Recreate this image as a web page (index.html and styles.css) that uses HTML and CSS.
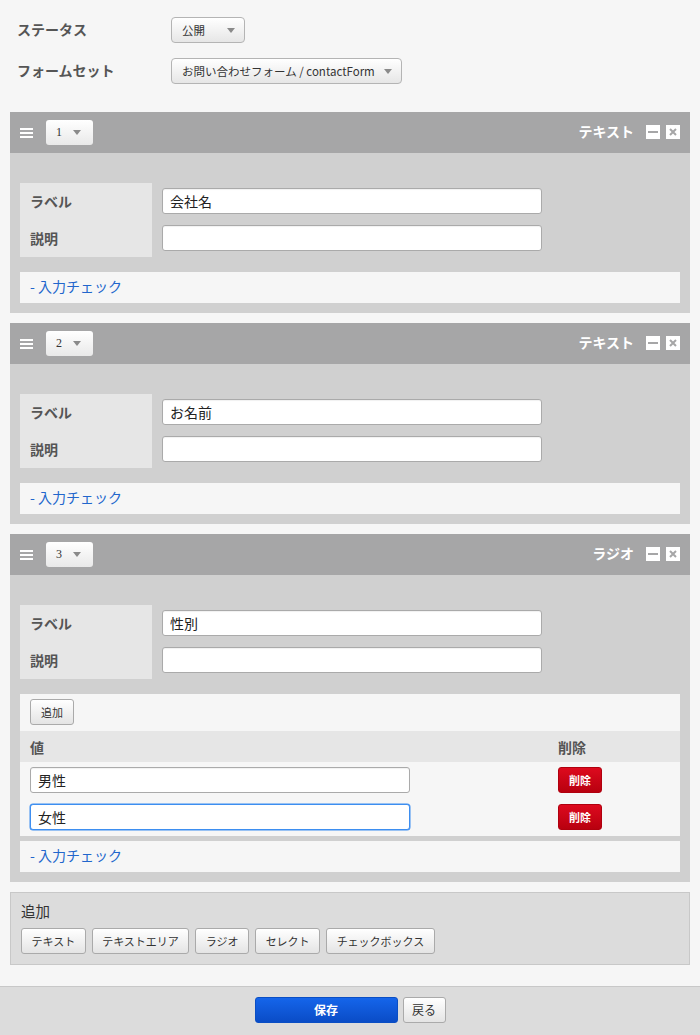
FILE: index.html
```html
<!DOCTYPE html>
<html lang="ja">
<head>
<meta charset="utf-8">
<title>フォーム編集</title>
<link rel="stylesheet" href="styles.css">
</head>
<body>
<div class="page">
  <div class="top-fields">
    <div class="top-row">
      <div class="top-label">ステータス</div>
      <div class="select sel-status"><span>公開</span><i class="arrow"></i></div>
    </div>
    <div class="top-row">
      <div class="top-label">フォームセット</div>
      <div class="select sel-formset"><span>お問い合わせフォーム / contactForm</span><i class="arrow"></i></div>
    </div>
  </div>

  <div class="block">
    <div class="block-head">
      <div class="handle"><i></i><i></i><i></i></div>
      <div class="num-select"><span>1</span><i class="arrow"></i></div>
      <div class="block-title">テキスト</div>
      <div class="tool tool-min"><i></i></div>
      <div class="tool tool-close"><svg viewBox="0 0 14 14" width="14" height="14"><path d="M4 4 L10 10 M10 4 L4 10" stroke="#a6a6a7" stroke-width="2"/></svg></div>
    </div>
    <div class="block-body">
      <div class="field-table">
        <div class="ft-label r1">ラベル</div>
        <div class="ft-input r1"><input class="text-input" type="text" value="会社名"></div>
        <div class="ft-label r2">説明</div>
        <div class="ft-input r2"><input class="text-input" type="text" value=""></div>
      </div>
      <div class="check-bar"><a class="check-link">- 入力チェック</a></div>
    </div>
  </div>

  <div class="block">
    <div class="block-head">
      <div class="handle"><i></i><i></i><i></i></div>
      <div class="num-select"><span>2</span><i class="arrow"></i></div>
      <div class="block-title">テキスト</div>
      <div class="tool tool-min"><i></i></div>
      <div class="tool tool-close"><svg viewBox="0 0 14 14" width="14" height="14"><path d="M4 4 L10 10 M10 4 L4 10" stroke="#a6a6a7" stroke-width="2"/></svg></div>
    </div>
    <div class="block-body">
      <div class="field-table">
        <div class="ft-label r1">ラベル</div>
        <div class="ft-input r1"><input class="text-input" type="text" value="お名前"></div>
        <div class="ft-label r2">説明</div>
        <div class="ft-input r2"><input class="text-input" type="text" value=""></div>
      </div>
      <div class="check-bar"><a class="check-link">- 入力チェック</a></div>
    </div>
  </div>

  <div class="block">
    <div class="block-head">
      <div class="handle"><i></i><i></i><i></i></div>
      <div class="num-select"><span>3</span><i class="arrow"></i></div>
      <div class="block-title">ラジオ</div>
      <div class="tool tool-min"><i></i></div>
      <div class="tool tool-close"><svg viewBox="0 0 14 14" width="14" height="14"><path d="M4 4 L10 10 M10 4 L4 10" stroke="#a6a6a7" stroke-width="2"/></svg></div>
    </div>
    <div class="block-body">
      <div class="field-table">
        <div class="ft-label r1">ラベル</div>
        <div class="ft-input r1"><input class="text-input" type="text" value="性別"></div>
        <div class="ft-label r2">説明</div>
        <div class="ft-input r2"><input class="text-input" type="text" value=""></div>
      </div>
      <div class="values">
        <div class="values-top"><button class="btn">追加</button></div>
        <div class="values-head"><div class="vh-value">値</div><div class="vh-del">削除</div></div>
        <div class="values-row first"><div class="v-cell"><input class="text-input value-input" type="text" value="男性"></div><div class="d-cell"><button class="btn-del">削除</button></div></div>
        <div class="values-row last"><div class="v-cell"><input class="text-input value-input focused" type="text" value="女性"></div><div class="d-cell"><button class="btn-del">削除</button></div></div>
      </div>
      <div class="check-bar close"><a class="check-link">- 入力チェック</a></div>
    </div>
  </div>

  <div class="add-box">
    <div class="add-title">追加</div>
    <div class="add-buttons">
      <button class="btn">テキスト</button>
      <button class="btn">テキストエリア</button>
      <button class="btn">ラジオ</button>
      <button class="btn">セレクト</button>
      <button class="btn">チェックボックス</button>
    </div>
  </div>
</div>

<div class="footer">
  <button class="btn-save">保存</button>
  <button class="btn">戻る</button>
</div>
</body>
</html>
```

FILE: styles.css
```css
html, body {
  margin: 0;
  padding: 0;
  background: #f6f6f6;
  font-family: "Noto Sans CJK JP", "Noto Sans", sans-serif;
  color: #333;
}

.page {
  padding: 17px 10px 0;
}

.top-fields {
  display: flex;
  flex-direction: column;
  gap: 15px;
  margin-bottom: 28px;
}

.top-row {
  display: flex;
  align-items: center;
  height: 26px;
}

.top-label {
  width: 161px;
  padding-left: 7px;
  box-sizing: border-box;
  font-size: 14px;
  font-weight: bold;
  color: #555;
  line-height: 20px;
  margin-top: -2px;
}

.select {
  height: 26px;
  box-sizing: border-box;
  border: 1px solid #b4b4b4;
  border-radius: 4px;
  background: linear-gradient(#ffffff, #e6e6e6);
  display: flex;
  align-items: center;
  justify-content: space-between;
  padding: 0 9px 0 10px;
  font-size: 11.5px;
  color: #333;
  line-height: 16px;
}

.sel-status { width: 74px; }
.sel-formset { width: 231px; }

.arrow {
  display: block;
  width: 0;
  height: 0;
  border-left: 4px solid transparent;
  border-right: 4px solid transparent;
  border-top: 5px solid #8a8a8a;
}

.block {
  margin-bottom: 10px;
}

.block-head {
  height: 41px;
  background: #a6a6a7;
  display: flex;
  align-items: center;
  padding: 0 10px;
}

.handle {
  width: 13px;
  display: flex;
  flex-direction: column;
  gap: 2px;
  margin-right: 13px;
}

.handle i {
  display: block;
  height: 2px;
  background: #fff;
}

.num-select {
  width: 47px;
  height: 25px;
  box-sizing: border-box;
  border-radius: 3px;
  background: linear-gradient(#ffffff, #e9e9e9);
  display: flex;
  align-items: center;
  justify-content: space-between;
  padding: 0 12px 0 10px;
  font-family: "Liberation Serif", serif;
  font-size: 12px;
  color: #333;
}

.block-title {
  margin-left: auto;
  margin-right: 12px;
  margin-top: -3px;
  color: #fff;
  font-weight: bold;
  font-size: 14px;
  line-height: 20px;
}

.tool {
  width: 14px;
  height: 14px;
  background: #fff;
  display: flex;
  align-items: center;
  justify-content: center;
  margin-top: -1px;
}

.tool-min i {
  display: block;
  width: 10px;
  height: 2px;
  background: #a6a6a7;
}

.tool-close {
  margin-left: 6px;
}

.tool-close svg {
  display: block;
}

.block-body {
  background: #d0d0d0;
  padding: 30px 10px 10px;
}

.field-table {
  display: grid;
  grid-template-columns: 132px 1fr;
}

.ft-label {
  background: #e6e6e6;
  padding-left: 10px;
  display: flex;
  align-items: center;
  font-size: 14px;
  font-weight: bold;
  color: #555;
}

.ft-input {
  padding-left: 10px;
}

.r1 { padding-top: 5px; padding-bottom: 5px; }
.r2 { padding-top: 6px; padding-bottom: 6px; }

.text-input {
  display: block;
  width: 380px;
  height: 26px;
  box-sizing: border-box;
  border: 1px solid #aaa;
  border-radius: 3px;
  background: #fff;
  padding: 0 7px;
  font-family: "Noto Sans CJK JP", sans-serif;
  font-size: 14px;
  color: #222;
  outline: none;
  box-shadow: inset 0 1px 1px rgba(0,0,0,0.06);
}

.text-input.focused {
  border-color: #3d8ef0;
  box-shadow: 0 0 0 0.5px #3d8ef0;
}

.check-bar {
  margin-top: 15px;
  height: 31px;
  background: #f6f6f6;
  display: flex;
  align-items: center;
  padding-left: 10px;
}

.check-bar.close {
  margin-top: 5px;
}

.check-link {
  color: #2266cc;
  font-size: 14px;
  line-height: 20px;
  margin-top: -3px;
}

.values {
  margin-top: 15px;
  background: #f6f6f6;
  padding-bottom: 6px;
}

.values-top {
  display: flex;
  padding: 5px 10px 6px;
}

.values-head {
  height: 31px;
  background: #e6e6e6;
  display: flex;
  align-items: center;
  font-size: 14px;
  font-weight: bold;
  color: #555;
}

.vh-value { width: 538px; padding-left: 10px; box-sizing: border-box; }

.values-row {
  display: flex;
  align-items: center;
}

.values-row.first { padding-top: 5px; }
.values-row.last { padding-top: 11px; }

.v-cell { width: 538px; padding-left: 10px; box-sizing: border-box; }

.d-cell { display: flex; }

.btn {
  height: 26px;
  box-sizing: border-box;
  border: 1px solid #aaa;
  border-radius: 3px;
  background: linear-gradient(#ffffff, #e4e4e4);
  padding: 0 9.5px;
  font-family: "Noto Sans CJK JP", sans-serif;
  font-size: 11px;
  color: #333;
  line-height: 16px;
  cursor: pointer;
}

.values-top .btn {
  width: 44px;
  padding: 0;
}

.btn-del {
  width: 44px;
  height: 26px;
  box-sizing: border-box;
  border: 1px solid #b0000e;
  border-radius: 3px;
  background: linear-gradient(#dd0a1e, #b8000f);
  color: #fff;
  font-family: "Noto Sans CJK JP", sans-serif;
  font-size: 11px;
  font-weight: bold;
  padding: 0;
  line-height: 16px;
}

.add-box {
  margin-top: 10px;
  background: #dcdcdc;
  border: 1px solid #c8c8c8;
  padding: 7px 10px 10px;
}

.add-title {
  font-size: 14.5px;
  line-height: 22px;
  color: #333;
  margin-bottom: 6px;
}

.add-buttons {
  display: flex;
  gap: 6px;
}

.footer {
  margin-top: 21px;
  background: #dcdcdc;
  border-top: 1px solid #c8c8c8;
  height: 60px;
  display: flex;
  justify-content: center;
  align-items: flex-start;
  padding-top: 10px;
  gap: 5px;
  box-sizing: border-box;
}

.btn-save {
  width: 143px;
  height: 26px;
  box-sizing: border-box;
  border: 1px solid #0a4ec4;
  border-radius: 3px;
  background: linear-gradient(#1565ea, #0a4cc6);
  color: #fff;
  font-family: "Noto Sans CJK JP", sans-serif;
  font-size: 12px;
  font-weight: bold;
  line-height: 16px;
  padding: 0;
}

.footer .btn {
  width: 43px;
  padding: 0;
  font-size: 12px;
}
```
